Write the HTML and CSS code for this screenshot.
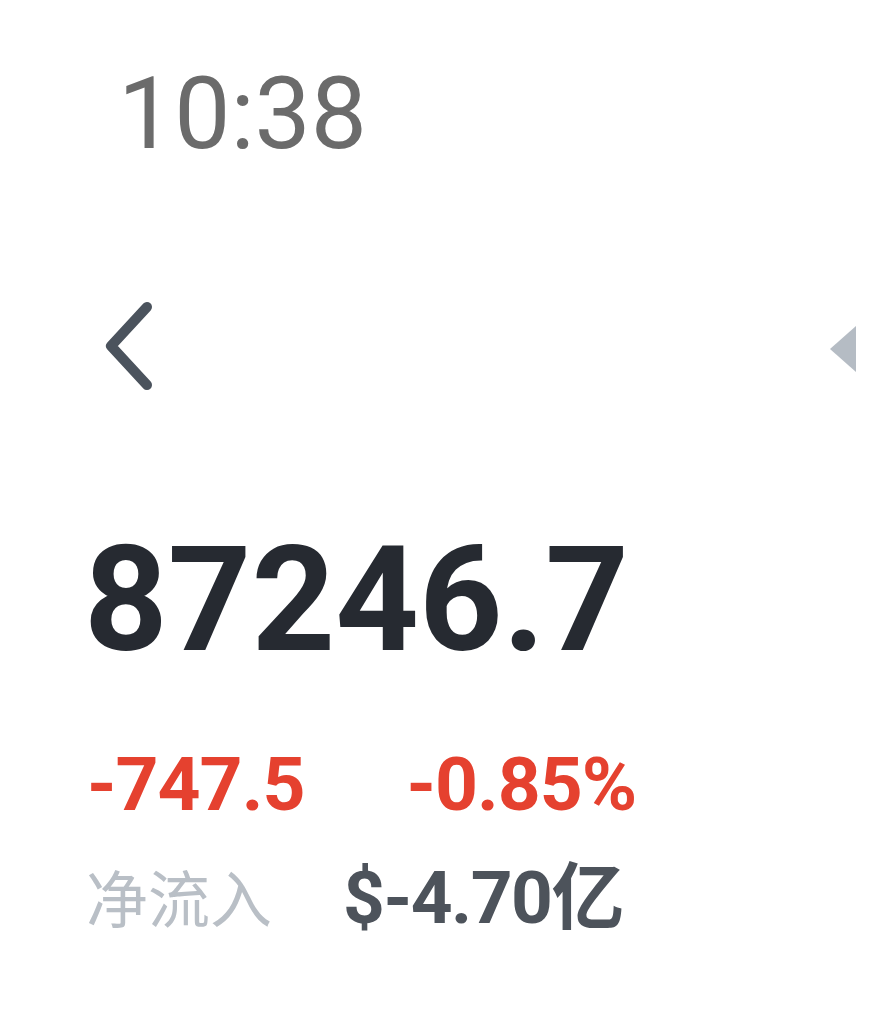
FILE: index.html
```html
<!DOCTYPE html>
<html lang="zh-CN">
<head>
<meta charset="utf-8">
<link rel="stylesheet" href="styles.css">
</head>
<body>
<div class="page">
  <div class="status">10:38</div>
  <div class="nav">
    <svg class="back" width="50" height="92" viewBox="0 0 50 92">
      <polyline points="43,7 7,46 43,85" fill="none" stroke="#4b535d" stroke-width="10" stroke-linecap="round" stroke-linejoin="round"/>
    </svg>
    <svg class="tri" width="30" height="46" viewBox="0 0 30 46">
      <polygon points="28,0 28,46 2,23" fill="#b5bcc4"/>
    </svg>
  </div>
  <div class="price">87246.7</div>
  <div class="change">
    <span class="chg">-747.5</span>
    <span class="pct">-0.85%</span>
  </div>
  <div class="flow">
    <span class="flow-label">净流入</span>
    <span class="flow-value">$-4.70亿</span>
  </div>
</div>
</body>
</html>
```
FILE: styles.css
```css
html, body {
  margin: 0;
  padding: 0;
  background: #ffffff;
}
body {
  width: 882px;
  height: 1024px;
  overflow: hidden;
  font-family: Roboto, "Noto Sans CJK SC", sans-serif;
}
.page {
  display: flex;
  flex-direction: column;
}
.status {
  padding: 64px 0 0 118px;
  font-size: 100px;
  line-height: 100px;
  color: #6b6b6b;
  font-weight: 400;
}
.nav {
  margin-top: 132px;
  height: 100px;
  display: flex;
  align-items: center;
  justify-content: space-between;
  padding: 0 24px 0 104px;
}
.tri {
  margin-top: 6px;
}
.price {
  margin-top: 132px;
  padding-left: 84px;
  font-size: 146px;
  line-height: 146px;
  font-weight: 700;
  color: #262a31;
}
.change {
  margin-top: 72px;
  display: flex;
  gap: 102px;
  padding-left: 87px;
  font-size: 75px;
  line-height: 76px;
  font-weight: 700;
  letter-spacing: -1px;
  color: #e5412f;
}
.flow {
  margin-top: 36px;
  display: flex;
  align-items: baseline;
  gap: 71px;
  padding-left: 86px;
  font-size: 73px;
  line-height: 77px;
}
.flow-label {
  font-family: "Noto Sans CJK SC", sans-serif;
  font-weight: 400;
  color: #b9bfc6;
  font-size: 62px;
}
.flow-value {
  font-weight: 700;
  letter-spacing: -1.5px;
  color: #4d535b;
}
```
